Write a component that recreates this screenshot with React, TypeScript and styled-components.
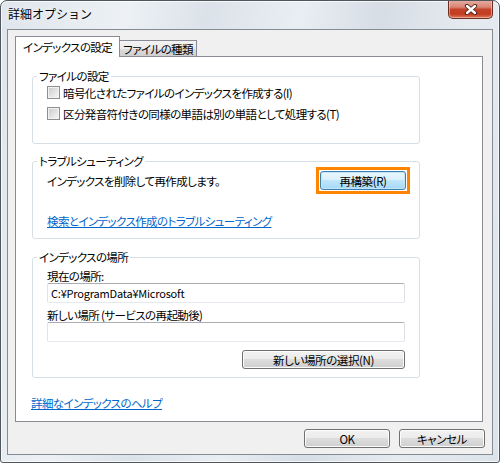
import styled, { createGlobalStyle } from "styled-components";

const GlobalStyle = createGlobalStyle`
  html, body {
    margin: 0;
    padding: 0;
    background: #ffffff;
  }
  body {
    font-family: "Noto Sans CJK JP", "Noto Sans", sans-serif;
    font-size: 12px;
    color: #000000;
  }
  * {
    box-sizing: border-box;
  }
`;

const Window = styled.div`
  width: 500px;
  height: 463px;
  display: flex;
  flex-direction: column;
  border: 1px solid #50565d;
  border-radius: 7px 7px 3px 3px;
  background: linear-gradient(
    100deg,
    #dfe5ec 0%,
    #edf1f5 22%,
    #dbe2e9 36%,
    #e9eef3 52%,
    #d6dde5 66%,
    #e6ebf0 82%,
    #dce3ea 100%
  );
  box-shadow: inset 0 0 0 1px rgba(255, 255, 255, 0.7);
  padding: 0 6px 7px 6px;
  overflow: hidden;
`;

const TitleBar = styled.div`
  height: 28px;
  display: flex;
  align-items: flex-start;
  justify-content: space-between;
  padding-left: 1px;
`;

const Title = styled.span`
  margin-top: 6px;
  line-height: 14px;
  font-size: 12px;
  color: #000000;
  text-shadow: 0 0 6px rgba(255, 255, 255, 0.9);
`;

const CloseButton = styled.div`
  width: 45px;
  height: 19px;
  margin-top: -1px;
  display: flex;
  align-items: center;
  justify-content: center;
  border: 1px solid #6b2d22;
  border-top: none;
  border-radius: 0 0 5px 5px;
  background: linear-gradient(
    #e8b0a3 0%,
    #d98372 40%,
    #c4432a 52%,
    #c33b20 78%,
    #dc7a5d 100%
  );
  box-shadow: inset 0 0 0 1px rgba(255, 220, 210, 0.5);
`;

const Client = styled.div`
  width: 486px;
  height: 426px;
  border: 1px solid #858b93;
  background: #f0f0f0;
  padding: 6px 9px 0 7px;
  display: flex;
  flex-direction: column;
  font-size: 11.5px;
  letter-spacing: -0.6px;
  font-feature-settings: "palt";
`;

const TabRow = styled.div`
  height: 20px;
  display: flex;
  align-items: flex-end;
`;

const Tab = styled.div<{ $active?: boolean }>`
  position: relative;
  z-index: ${(p) => (p.$active ? 1 : 0)};
  height: ${(p) => (p.$active ? "21px" : "17px")};
  margin-bottom: -1px;
  margin-left: ${(p) => (p.$active ? "0" : "-1px")};
  padding: ${(p) => (p.$active ? "0 7px" : "0 3px")};
  display: flex;
  align-items: center;
  border: 1px solid #898c95;
  border-bottom: ${(p) => (p.$active ? "none" : "1px solid #898c95")};
  background: ${(p) =>
    p.$active ? "#ffffff" : "linear-gradient(#f3f3f3 0%, #ebebeb 50%, #dddddd 51%, #cfcfcf 100%)"};
  line-height: 14px;
`;

const Panel = styled.div`
  width: 468px;
  height: 366px;
  border: 1px solid #898c95;
  background: #ffffff;
  display: flex;
  flex-direction: column;
  align-items: flex-start;
  padding-top: 12px;
`;

const Group = styled.fieldset<{ $top?: number; $bottom?: number }>`
  margin: ${(p) => p.$top ?? 0}px 0 0 16px;
  width: 388px;
  min-width: 0;
  border: 1px solid #d5dfe5;
  border-radius: 3px;
  padding: 0 14px ${(p) => p.$bottom ?? 10}px 14px;
  display: flex;
  flex-direction: column;
`;

const Legend = styled.legend`
  margin-left: -10px;
  padding: 0 2px;
  line-height: 14px;
`;

const CheckRow = styled.label<{ $gap?: number }>`
  height: 19px;
  margin-top: ${(p) => p.$gap ?? 0}px;
  display: flex;
  align-items: center;
  gap: 3px;
  line-height: 14px;
`;

const CheckBox = styled.span`
  width: 13px;
  height: 13px;
  flex: 0 0 13px;
  border: 1px solid #8f8f8f;
  background: linear-gradient(135deg, #c8c8c8 0%, #e6e6e6 60%, #f6f6f6 100%);
  box-shadow: inset 0 0 0 1px #f2f2f2;
`;

const ActionRow = styled.div`
  margin-top: -1px;
  height: 27px;
  display: flex;
  align-items: center;
  justify-content: space-between;
  margin-right: -5px;
  line-height: 14px;
`;

const Highlight = styled.span`
  display: flex;
  border: 3px solid #ff8400;
  padding: 1px;
  background: #ffffff;
`;

const Button = styled.button<{ $width: number; $focus?: boolean }>`
  width: ${(p) => p.$width}px;
  height: 19px;
  padding: 0;
  font-family: "Noto Sans CJK JP", "Noto Sans", sans-serif;
  font-size: 11.5px;
  letter-spacing: -0.4px;
  line-height: 14px;
  color: #000000;
  font-feature-settings: "palt";
  border: 1px solid ${(p) => (p.$focus ? "#3c7fb1" : "#707070")};
  border-radius: 3px;
  background: ${(p) =>
    p.$focus
      ? "linear-gradient(#eaf6fd 0%, #d9f0fc 49%, #bee6fd 50%, #a7d9f5 100%)"
      : "linear-gradient(#f2f2f2 0%, #ebebeb 49%, #dddddd 50%, #cfcfcf 100%)"};
  box-shadow: inset 0 0 0 1px ${(p) => (p.$focus ? "#c4e5f6" : "#fcfcfc")};
`;

const Link = styled.a<{ $top?: number; $left?: number }>`
  display: block;
  margin-top: ${(p) => p.$top ?? 0}px;
  margin-left: ${(p) => p.$left ?? 0}px;
  line-height: 14px;
  color: #0066cc;
  text-decoration: underline;
  cursor: pointer;
`;

const FieldLabel = styled.div<{ $top?: number }>`
  margin-top: ${(p) => p.$top ?? 0}px;
  line-height: 14px;
`;

const TextBox = styled.div`
  width: 100%;
  height: 20px;
  display: flex;
  align-items: center;
  padding: 0 3px;
  border: 1px solid;
  border-color: #abadb3 #dbdfe6 #e3e9ef #e2e3ea;
  border-radius: 2px;
  background: #ffffff;
  font-size: 11px;
  letter-spacing: -0.2px;
`;

const ButtonEnd = styled.div`
  margin-top: 8px;
  display: flex;
  justify-content: flex-end;
`;

const Footer = styled.div`
  margin-top: 7px;
  margin-right: -2px;
  display: flex;
  justify-content: flex-end;
  gap: 9px;
`;

export default function App() {
  return (
    <>
      <GlobalStyle />
      <Window>
        <TitleBar>
          <Title>詳細オプション</Title>
          <CloseButton>
            <svg width="14" height="11" viewBox="0 0 14 11">
              <path d="M3 2 L11 9 M11 2 L3 9" stroke="#4a1f16" strokeWidth="4.2" strokeLinecap="round" />
              <path d="M3 2 L11 9 M11 2 L3 9" stroke="#ffffff" strokeWidth="2.4" strokeLinecap="round" />
            </svg>
          </CloseButton>
        </TitleBar>
        <Client>
          <TabRow>
            <Tab $active>インデックスの設定</Tab>
            <Tab>ファイルの種類</Tab>
          </TabRow>
          <Panel>
            <Group $bottom={20}>
              <Legend>ファイルの設定</Legend>
              <CheckRow>
                <CheckBox />
                暗号化されたファイルのインデックスを作成する(I)
              </CheckRow>
              <CheckRow $gap={2}>
                <CheckBox />
                区分発音符付きの同様の単語は別の単語として処理する(T)
              </CheckRow>
            </Group>

            <Group $top={10} $bottom={10}>
              <Legend>トラブルシューティング</Legend>
              <ActionRow>
                <span>インデックスを削除して再作成します。</span>
                <Highlight>
                  <Button $width={86} $focus>
                    再構築(R)
                  </Button>
                </Highlight>
              </ActionRow>
              <Link $top={20}>検索とインデックス作成のトラブルシューティング</Link>
            </Group>

            <Group $top={11} $bottom={8}>
              <Legend>インデックスの場所</Legend>
              <FieldLabel $top={5}>現在の場所:</FieldLabel>
              <TextBox>C:¥ProgramData¥Microsoft</TextBox>
              <FieldLabel $top={5}>新しい場所 (サービスの再起動後)</FieldLabel>
              <TextBox />
              <ButtonEnd>
                <Button $width={163}>新しい場所の選択(N)</Button>
              </ButtonEnd>
            </Group>

            <Link $top={18} $left={15}>
              詳細なインデックスのヘルプ
            </Link>
          </Panel>
          <Footer>
            <Button $width={86}>OK</Button>
            <Button $width={86}>キャンセル</Button>
          </Footer>
        </Client>
      </Window>
    </>
  );
}
